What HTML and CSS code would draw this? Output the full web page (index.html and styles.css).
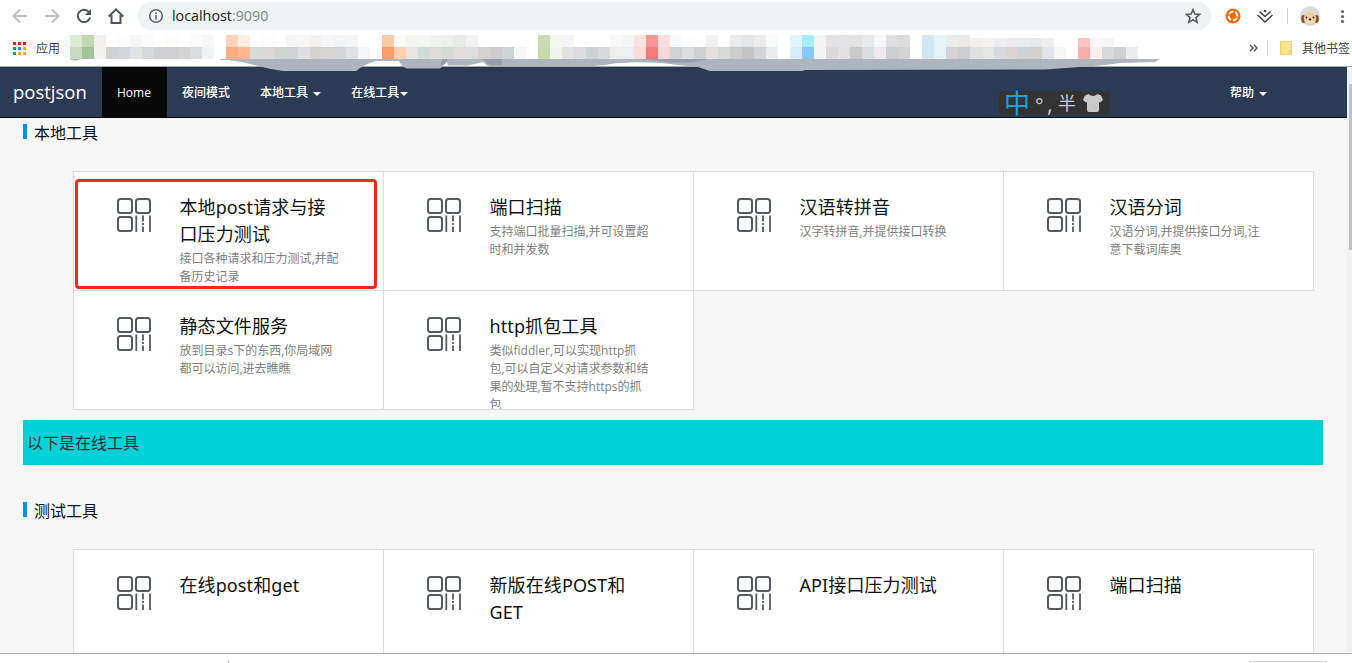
FILE: index.html
```html
<!DOCTYPE html>
<html lang="zh-CN">
<head>
<meta charset="utf-8">
<title>postjson</title>
<link rel="stylesheet" href="styles.css">
</head>
<body>
<svg class="defs" width="0" height="0">
  <symbol id="qr" viewBox="0 0 34 34">
    <g fill="none" stroke="#555a5e" stroke-width="2">
      <rect x="1" y="1" width="14" height="14" rx="2.5"/>
      <rect x="19" y="1" width="14" height="14" rx="2.5"/>
      <rect x="1" y="19" width="14" height="14" rx="2.5"/>
      <path d="M19.3 17.5V34M33 17.5V34M26 17.5V23.500M26 25V27M26 28.5V34" stroke-width="1.8"/>
    </g>
  </symbol>
</svg>
<div class="window">
  <header class="chrome">
    <div class="toolbar">
      <svg class="nav-icons" width="130" height="32" viewBox="0 0 130 32" fill="none" stroke-width="1.9">
        <path d="M27 16H14M20 9.5L13.5 16L20 22.500" stroke="#babcbe"/>
        <path d="M45 16H58M52 9.500L58.500 16L52 22.500" stroke="#babcbe"/>
        <path d="M89 12.200A6.200 6.200 0 1 0 90 17.500" stroke="#50555a" stroke-width="2"/>
        <path d="M91 9V15H85Z" fill="#50555a"/>
        <path d="M108.800 16.500L116 9.300L123.200 16.500M111.500 15V23H120.500V15" stroke="#50555a" stroke-width="2"/>
      </svg>
      <div class="omnibox">
        <svg width="16" height="16" viewBox="0 0 16 16"><circle cx="8" cy="8" r="6.300" fill="none" stroke="#5f6368" stroke-width="1.500"/><path d="M8 7V11.500M8 4.500V6" stroke="#5f6368" stroke-width="1.600"/></svg>
        <span class="url">localhost<i>:9090</i></span>
        <svg class="star" width="16" height="16" viewBox="0 0 16 16"><path d="M8 1.500L9.800 6L14.700 6.400L11 9.600L12.200 14.300L8 11.700L3.800 14.300L5 9.600L1.300 6.400L6.200 6Z" fill="none" stroke="#55595e" stroke-width="1.500"/></svg>
      </div>
      <svg class="extensions" width="141" height="32" viewBox="1211 0 141 32">
        <circle cx="1233" cy="16" r="7.500" fill="#ff6a0a"/>
        <circle cx="1233" cy="16" r="4.300" fill="none" stroke="#fff" stroke-width="1.800" stroke-dasharray="4.750 2" transform="rotate(25 1233 16)"/>
        <g fill="none" stroke="#3c4043" stroke-width="1.500"><path d="M1257.500 15L1265 22L1272.500 15M1259.500 11.500L1265 16.500L1270.500 11.500"/></g>
        <circle cx="1265" cy="11" r="1.300" fill="#3c4043"/>
        <path d="M1287.500 8V24" stroke="#cfd1d3"/>
        <circle cx="1310" cy="16" r="10" fill="#dadada"/>
        <ellipse cx="1303.500" cy="19" rx="2.300" ry="4" fill="#86532b"/>
        <ellipse cx="1316.500" cy="19" rx="2.300" ry="4" fill="#86532b"/>
        <ellipse cx="1310" cy="18.500" rx="6.200" ry="6.500" fill="#f1cea2"/>
        <ellipse cx="1310" cy="21" rx="3.500" ry="2.800" fill="#f5d9b3"/>
        <g fill="#38291f"><circle cx="1306.500" cy="17.500" r=".9"/><circle cx="1313.500" cy="17.500" r=".9"/><ellipse cx="1310" cy="19.500" rx="1.400" ry=".9"/></g>
        <g fill="#5f6368"><circle cx="1342.500" cy="11.500" r="1.600"/><circle cx="1342.500" cy="16.500" r="1.600"/><circle cx="1342.500" cy="21.500" r="1.600"/></g>
      </svg>
    </div>
    <div class="bookmarks">
      <svg class="apps" width="13" height="13" viewBox="0 0 13 13">
        <path d="M0 0h3v3H0zM5 0h3v3H5zM10 0h3v3h-3z" fill="#f3200f"/>
        <path d="M0 5h3v3H0zM0 10h3v3H0z" fill="#16a45b"/>
        <path d="M5 5h3v3H5z" fill="#168cf5"/>
        <path d="M10 5h3v3h-3zM5 10h3v3H5zM10 10h3v3h-3z" fill="#ffaa08"/>
      </svg>
      <span>应用</span>
      <div class="spacer"></div>
      <svg width="9" height="8" viewBox="0 0 9 8"><path d="M1 .8L4 4L1 7.200M5 .8L8 4L5 7.200" fill="none" stroke="#55595e" stroke-width="1.500"/></svg>
      <div class="rule"></div>
      <svg width="12" height="14" viewBox="0 0 12 14"><path d="M.5.5H11.500V13.500H.5Z" fill="#ffe593" stroke="#f7cf5c"/><path d="M9.500 13V9.500H11" fill="none" stroke="#f7cf5c"/></svg>
      <span class="other">其他书签</span>
    </div>
    <svg class="mosaic" width="1110" height="40" viewBox="60 33 1110 40">
      <rect x="62" y="35" width="14" height="24" rx="7" fill="#f7f8f9"/>
      <g id="cells" shape-rendering="crispEdges"></g>
      <path d="M70 59H81Q76 62 71 60ZM220 59H1160L1155 62L1120 63L1105 65L1080 67L1045 69.500L805 70L802 71H710L698 67L678 65C650 61 620 62 606 65L592 66H488L483 62L468 65.500H448L447 62L440 68.500H407Q402 67 399 61H376Q365 64 356 71H283Q268 69 250 64Q235 60 220 60Z" fill="#afb5be"/>
      <path d="M443 59H448L445 64L440 65ZM482 59H502V65H490ZM640 59H706V60L690 62.500H670Z" fill="#8f98a5" opacity=".8"/>
    </svg>
  </header>

  <div class="viewport">
    <div class="page">
      <nav class="navbar">
        <a class="brand">postjson</a>
        <a class="item active">Home</a>
        <a class="item">夜间模式</a>
        <a class="item">本地工具 <b class="caret"></b></a>
        <a class="item tight">在线工具<b class="caret"></b></a>
        <a class="item help">帮助 <b class="caret"></b></a>
      </nav>
      <div class="ime">
        <span class="zh">中</span><span class="deg">°</span><span class="comma">,</span><span class="half">半</span>
        <svg width="20" height="18" viewBox="0 0 20 18"><path d="M5.500 0Q10 4 14.500 0L18 1.500L20 6L17 8.500L16 8V16Q16 18 14 18H6Q4 18 4 16V8L3 8.500L0 6L2 1.500Z" fill="#c9c9c9"/></svg>
      </div>

      <h2 class="section">本地工具</h2>
      <div class="cards">
        <div class="card marked"><svg><use href="#qr"/></svg><div><h3>本地post请求与接<br>口压力测试</h3><p>接口各种请求和压力测试,并配<br>备历史记录</p></div></div>
        <div class="card"><svg><use href="#qr"/></svg><div><h3>端口扫描</h3><p>支持端口批量扫描,并可设置超<br>时和并发数</p></div></div>
        <div class="card"><svg><use href="#qr"/></svg><div><h3>汉语转拼音</h3><p>汉字转拼音,并提供接口转换</p></div></div>
        <div class="card"><svg><use href="#qr"/></svg><div><h3>汉语分词</h3><p>汉语分词,并提供接口分词,注<br>意下载词库奥</p></div></div>
        <div class="card"><svg><use href="#qr"/></svg><div><h3>静态文件服务</h3><p>放到目录s下的东西,你局域网<br>都可以访问,进去瞧瞧</p></div></div>
        <div class="card"><svg><use href="#qr"/></svg><div><h3>http抓包工具</h3><p>类似fiddler,可以实现http抓<br>包,可以自定义对请求参数和结<br>果的处理,暂不支持https的抓<br>包</p></div></div>
      </div>

      <div class="banner">以下是在线工具</div>

      <h2 class="section second">测试工具</h2>
      <div class="cards">
        <div class="card"><svg><use href="#qr"/></svg><div><h3>在线post和get</h3></div></div>
        <div class="card"><svg><use href="#qr"/></svg><div><h3>新版在线POST和<br>GET</h3></div></div>
        <div class="card"><svg><use href="#qr"/></svg><div><h3>API接口压力测试</h3></div></div>
        <div class="card"><svg><use href="#qr"/></svg><div><h3>端口扫描</h3></div></div>
      </div>
    </div>
    <div class="scrollbar"><div class="thumb"></div></div>
  </div>
  <footer class="shelf"><div class="tick"></div><div class="button"></div></footer>
</div>
<script src="mosaic.js"></script>
</body>
</html>
```
FILE: styles.css
```css
*, *::before, *::after { box-sizing: border-box; }
body {
  margin: 0;
  font-family: "Open Sans", "Noto Sans CJK SC", sans-serif;
  font-size: 12px;
  color: #111;
  overflow: hidden;
}
svg { display: block; flex: none; }
.defs { position: absolute; }
.window { width: 1352px; height: 663px; display: flex; flex-direction: column; background: #fff; overflow: hidden; }

.chrome { height: 67px; flex: none; position: relative; border-bottom: 1px solid #aaa9aa; }
.toolbar { display: flex; height: 32px; }
.nav-icons { margin-right: 8px; }
.omnibox { width: 1073px; height: 28px; margin-top: 2px; padding: 0 10px; border-radius: 14px; background: #eef2f3; display: flex; align-items: center; }
.url { margin-left: 8px; font-size: 14.3px; line-height: 28px; color: #202124; white-space: nowrap; }
.url i { font-style: normal; color: #80868b; }
.star { margin-left: auto; }
.bookmarks { display: flex; align-items: center; height: 32px; padding-left: 13px; white-space: nowrap; color: #3c4043; }
.apps { margin-right: 10px; }
.spacer { flex: 1; }
.rule { width: 1px; height: 16px; margin: 0 12px 0 9px; background: #cfd1d3; }
.other { margin: 0 2px 0 10px; }
.mosaic { position: absolute; left: 60px; top: 33px; z-index: 3; }

.viewport { height: 586px; flex: none; display: flex; overflow: hidden; }
.page { width: 1347px; flex: none; background: #f6f6f6; position: relative; }
.scrollbar { width: 5px; background: #f1f1f1; padding: 17px 0 0 2px; }
.thumb { height: 166px; background: #c1c1c1; }

.navbar { height: 51px; display: flex; background: #2c3b54; border-bottom: 1px solid #05070b; color: #fff; line-height: 52px; }
.brand { width: 102px; padding-left: 13px; font-size: 18.5px; line-height: 50px; }
.item { padding: 0 15px; height: 50px; font-weight: 500; white-space: nowrap; }
.active { width: 65px; background: #080808; }
.caret { display: inline-block; margin-left: 2px; vertical-align: middle; border-top: 4px solid; border-left: 4px solid transparent; border-right: 4px solid transparent; }
.tight .caret { margin-left: 1px; }
.help { margin-left: auto; margin-right: 65px; }

.ime { position: absolute; left: 999px; top: 24px; width: 111px; height: 24px; padding-left: 5px; border-radius: 4px; background: #333; display: flex; align-items: center; color: #c9c9c9; line-height: 24px; }
.zh { width: 27px; color: #0ea2ef; font-size: 26px; }
.deg { width: 12px; margin-left: 4px; font-size: 20px; padding-top: 6px; }
.comma { width: 8px; font-size: 22px; }
.half { width: 18px; font-size: 18px; margin: 0 7px 0 3px; }

.section { margin: 6px 0 0 23px; height: 18px; display: flex; align-items: flex-start; font-size: 16px; font-weight: 400; line-height: 19px; }
.section::before { content: ""; width: 4px; height: 15px; margin-right: 7px; background: #0590ea; }
.section.second { margin-top: 37px; }
.cards { margin: 29px 0 0 73px; display: grid; grid-template-columns: repeat(4, 310px); grid-auto-rows: 119px; }
.card { width: 311px; height: 120px; overflow: hidden; display: flex; padding: 22px 0 0 43px; border: 1px solid #ddd; background: #fff; white-space: nowrap; }
.card svg { width: 34px; height: 34px; margin: 4px 28.5px 0 0; }
.card h3 { margin: 0; font-family: "Noto Sans", "Noto Sans CJK SC", sans-serif; font-size: 18px; font-weight: 400; line-height: 26.8px; letter-spacing: 0.1px; }
.card p { margin: 2px 0 0; line-height: 18px; color: #808080; }
.marked { position: relative; }
.marked::after { content: ""; position: absolute; left: 1px; top: 7px; width: 302px; height: 110px; border: 3px solid #ff2716; border-radius: 4px; }
.banner { width: 1300px; height: 45px; margin: 11px 0 0 23px; padding-left: 4px; background: #00d2d8; font-size: 16px; line-height: 47px; color: #333; }

.shelf { height: 10px; flex: none; border-top: 1px solid #b0b0b0; background: #fff; display: flex; align-items: flex-end; padding: 0 25px 0 228px; }
.tick { width: 1px; height: 3px; background: #bbb; }
.button { width: 78px; height: 2px; margin-left: auto; border: 1px solid #d2d2d2; border-bottom: 0; border-radius: 3px 3px 0 0; }
```
FILE: mosaic.js
```js
// Two rows of 12px colour cells along the bookmarks bar.
const rows = [
  "dbead3 c0d8b2 f1efed fff fcfcfc f5f5f5 fbfbfb fff fcfdfb fff fbfbfb f7f7f7 fff ffd2b9 ffece4 fff fcfcfc fff f5f5f5 f6f6f6 f3f2f1 f5f5fa f1f3f5 f5f5f5 fff fff ffc9a8 fffaf8 f4f4f3 f4f6f4 f1f1f0 eef0ef e9e9e8 f1f1f1 fff fff fff fff fff c8ddb3 f2f8ec f5f5f7 fff fff fff f8f8f6 f2f4f6 ffe1e0 f29795 fbdfe0 f8f9fb fdfdfb fff f0f0f0 fff ebeae8 e4e5e7 ebebea f8fbfa fff dff6ff a3ecff f6f4f3 e0e2e5 e3e3e4 e3e2e1 e8e9eb f7f6fa e0e0e0 dcdcdc fff d0e7f0 e5f3fa ebebeb eae9e8 f0f0f0 f4f2f0 ecedef eceaea e8ebec e8e8e8 eeeeee fff fff f8c5c2 fff5f4 f5f5f5 fff fff",
  "c9dcc2 a3c39d f1f1ef d2d2d4 d3d7dc e1e2e2 d7d8dc d0d0d2 d0cfd0 d4d4d4 dcdcdc f1f2f5 fff ffad85 ffb78f d5dcdb dbd8d8 d0d5d2 cfd5d4 dfdfe2 d5d2d0 d6d3d3 d0d7d7 dfe1e4 f7f7f7 fff ff9e69 ffceb3 e4e4e2 d3dbd8 dfdcda d6dbd9 e2dcdb dcdee0 d5d1d1 ccccce cdd5d5 f5f5f5 fff c5dbaa eff6e9 e2e2e2 dcdcdc cdd2d5 d7dad8 eeeeee e9eef1 ffdcdb f37c7a f7d8d9 d1d1d6 dcdedc cdd2d2 e3e0de d5dad6 cdcdcd c5c5c5 d1d5d5 ebecef fff d5edff 8ac9ff f3f3f3 dadada e4e0e1 cacaca d8dedd efe9ed cdced0 d3d3d4 fff cfe7ef e2f1f8 d6d3d4 cfcece dde1e2 e4e5e2 d8d9dd dad5d4 cdd3d6 d2d1cf e0e4e8 f6f6f6 fff f8b0ac ffefec dadadc cfd0d2 ebedec"
];
const group = document.getElementById("cells");
rows.forEach((row, r) => row.split(" ").forEach((colour, i) => {
  const cell = document.createElementNS("http://www.w3.org/2000/svg", "rect");
  const top = r ? 47 : i > 74 ? 38 : 35;
  cell.setAttribute("x", 70 + i * 12);
  cell.setAttribute("y", top);
  cell.setAttribute("width", 12);
  cell.setAttribute("height", (r ? 59 : 47) - top);
  cell.setAttribute("fill", "#" + colour);
  group.append(cell);
}));
```
